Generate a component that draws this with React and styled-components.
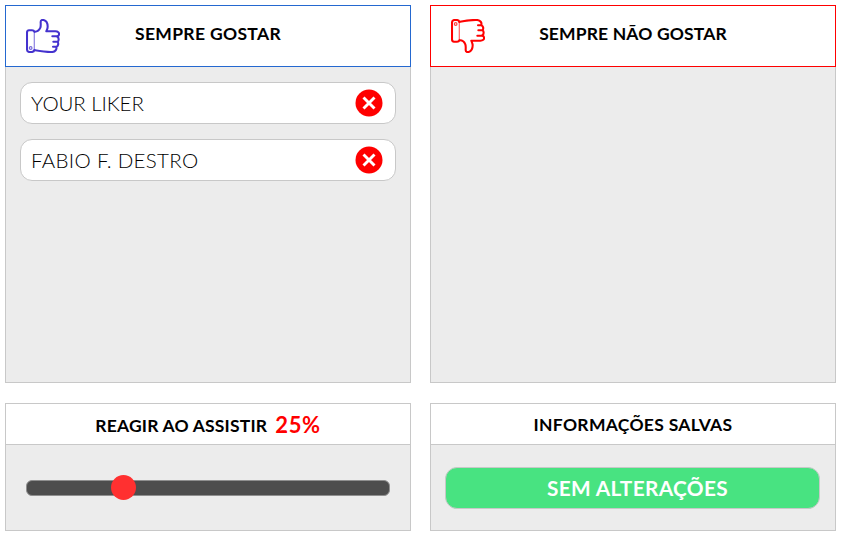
import React, { useState } from "react";
import styled, { createGlobalStyle } from "styled-components";

const GlobalStyle = createGlobalStyle`
  *, *::before, *::after { box-sizing: border-box; }
  body { margin: 0; background: #fff; }
`;

const Page = styled.main`
  display: grid;
  grid-template-columns: 406px 406px;
  grid-template-rows: 378px 128px;
  gap: 20px 19px;
  padding: 5px;
  width: 841px;
  height: 536px;
  font-family: Lato, "Liberation Sans", sans-serif;
  color: #000;
`;

const Panel = styled.section`
  display: flex;
  flex-direction: column;
`;

const ReactionHeader = styled.header`
  display: grid;
  grid-template-columns: 34px 1fr 34px;
  align-items: center;
  height: 62px;
  padding: 0 20px;
  background: #fff;
  border: 1px solid ${(p) => p.$color};
`;

const SettingHeader = styled.header`
  display: flex;
  align-items: center;
  justify-content: center;
  gap: 8px;
  height: 42px;
  border: 1px solid #c8c8c8;
  background: #fff;
`;

const Title = styled.h2`
  margin: 0;
  padding-top: ${(p) => p.$drop || 0}px;
  padding-bottom: ${(p) => p.$lift || 0}px;
  font-size: 17.5px;
  line-height: 20px;
  font-weight: 700;
  letter-spacing: ${(p) => p.$tracking || 0}px;
  text-align: center;
  white-space: nowrap;
`;

const Percent = styled.output`
  padding-top: 1px;
  font-size: 22px;
  line-height: 26px;
  font-weight: 700;
  letter-spacing: 0.6px;
  color: #f00;
`;

const Body = styled.div`
  flex: 1;
  display: flex;
  flex-direction: column;
  gap: 15px;
  padding: 15px 14px;
  background: #ececec;
  border: 1px solid #c8c8c8;
  border-top: 0;
`;

const SettingBody = styled(Body)`
  justify-content: center;
  padding: 0 ${(p) => p.$inset}px;
`;

const Person = styled.div`
  display: flex;
  align-items: center;
  justify-content: space-between;
  height: 42px;
  padding: 0 12px 0 10px;
  background: #fff;
  border: 1px solid #c8c8c8;
  border-radius: 12px;
`;

const Name = styled.span`
  padding-bottom: 1px;
  font-size: 20.5px;
  line-height: 26px;
  font-weight: 300;
  letter-spacing: ${(p) => p.$tracking || 0}px;
`;

const RemoveButton = styled.button`
  display: flex;
  padding: 0;
  border: 0;
  background: none;
  cursor: pointer;
`;

const Track = styled.div`
  display: flex;
  align-items: center;
  height: 16px;
  background: #4d4d4d;
  border: 1px solid #8f8f8f;
  border-radius: 6px;
`;

const Thumb = styled.span`
  flex: none;
  width: 25px;
  height: 25px;
  border-radius: 50%;
  background: #ff3030;
`;

const SaveButton = styled.button`
  width: 375px;
  height: 42px;
  padding: 1px 0 0 10px;
  border: 1px solid #c8c8c8;
  border-radius: 12px;
  background: #48e381;
  color: #fff;
  font-family: inherit;
  font-size: 20.8px;
  line-height: 26px;
  font-weight: 700;
  letter-spacing: 0.35px;
`;

const ThumbSvg = styled.svg`
  display: block;
  width: 34px;
  height: 34px;
  transform: ${(p) => (p.$down ? "scaleY(-1)" : "none")};
`;

function ThumbIcon({ color, down }) {
  return (
    <ThumbSvg $down={down} viewBox="0 0 102 102" fill="none" stroke={color} strokeWidth="6.2" strokeLinecap="round" strokeLinejoin="round">
      <path d="M25 38C24 35 22 34 18 34H9Q3 34 3 41V91Q3 99 10 99H17Q24 99 25 93" />
      <path d="M25 37V94" strokeWidth="4" opacity=".55" />
      <path d="M27 38C34 38 40 33 43 26C45 20 44 14 44 9C44 3 49 2 53 3C61 5 65 14 65 23C65 29 62 34 61 37H88C96 37 100 41 99 46C99 50 97 52 93 52H79" />
      <path d="M94 53C99 56 99 65 95 68H82M95 69C98 73 97 80 92 83H81M91 84C93 91 88 98 79 99C61 100 44 97 27 94" />
      <circle cx="14" cy="87" r="4" strokeWidth="3.5" opacity=".75" />
    </ThumbSvg>
  );
}

function RemoveIcon() {
  return (
    <svg width="28" height="28" viewBox="0 0 28 28">
      <circle cx="14" cy="14" r="13.5" fill="#f00" />
      <path d="M8.5 8.5L19.5 19.5M19.5 8.5L8.5 19.5" stroke="#fff" strokeWidth="2.9" />
    </svg>
  );
}

const initialPeople = [
  { name: "YOUR LIKER", tracking: -0.1 },
  { name: "FABIO F. DESTRO", tracking: 0.33 },
];

export default function App() {
  const [people, setPeople] = useState(initialPeople);
  const percent = 25;

  return (
    <>
      <GlobalStyle />
      <Page>
        <Panel>
          <ReactionHeader $color="#2468d0">
            <ThumbIcon color="#4432ce" />
            <Title $lift={4} $tracking={0.33}>SEMPRE GOSTAR</Title>
          </ReactionHeader>
          <Body>
            {people.map((p) => (
              <Person key={p.name}>
                <Name $tracking={p.tracking}>{p.name}</Name>
                <RemoveButton aria-label="Remover" onClick={() => setPeople(people.filter((q) => q !== p))}>
                  <RemoveIcon />
                </RemoveButton>
              </Person>
            ))}
          </Body>
        </Panel>
        <Panel>
          <ReactionHeader $color="#f00">
            <ThumbIcon color="#f00" down />
            <Title $lift={4} $tracking={0.14}>SEMPRE NÃO GOSTAR</Title>
          </ReactionHeader>
          <Body />
        </Panel>
        <Panel>
          <SettingHeader>
            <Title $drop={3} $tracking={0.19}>REAGIR AO ASSISTIR</Title>
            <Percent>{percent}%</Percent>
          </SettingHeader>
          <SettingBody $inset={20}>
            <Track>
              <Thumb style={{ marginLeft: `calc((100% - 25px) * ${percent / 100})` }} />
            </Track>
          </SettingBody>
        </Panel>
        <Panel>
          <SettingHeader>
            <Title $drop={2} $tracking={0.3}>INFORMAÇÕES SALVAS</Title>
          </SettingHeader>
          <SettingBody $inset={14}>
            <SaveButton>SEM ALTERAÇÕES</SaveButton>
          </SettingBody>
        </Panel>
      </Page>
    </>
  );
}
